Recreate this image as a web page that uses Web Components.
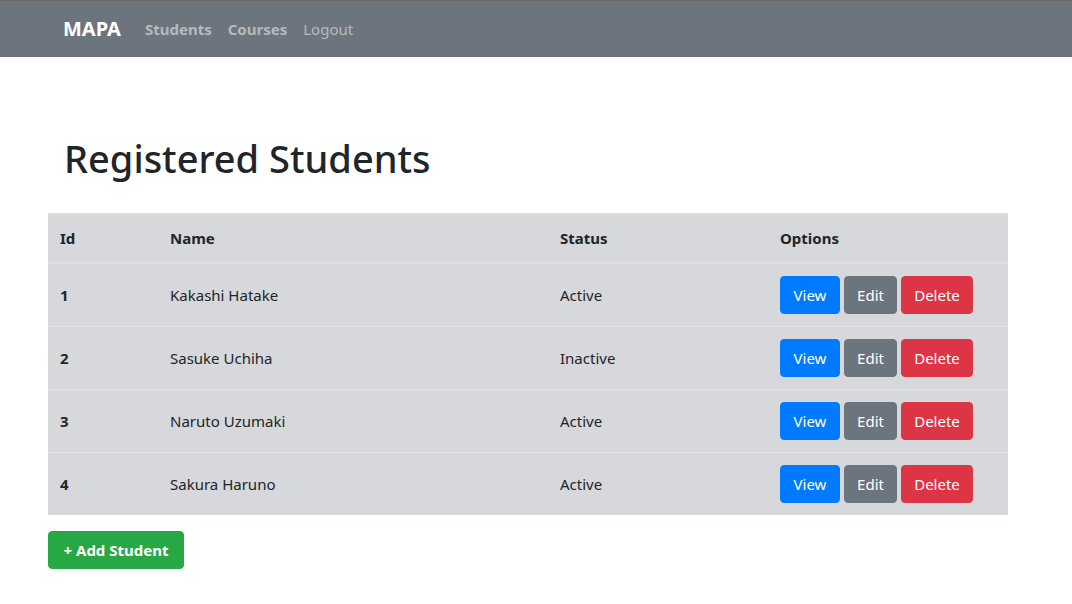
<!DOCTYPE html>
<html lang="en">
<head>
<meta charset="utf-8">
<meta name="viewport" content="width=device-width, initial-scale=1">
<title>MAPA - Registered Students</title>
<style>
  :root {
    --gray: #6c757d;
    --blue: #007bff;
    --red: #dc3545;
    --green: #28a745;
    --text: #212529;
  }
  body {
    margin: 0;
    background: #fff;
    color: var(--text);
    font: 400 15px/24px "Noto Sans", "Open Sans", sans-serif;
  }
</style>
</head>
<body>
<mapa-app></mapa-app>

<script>
class Base extends HTMLElement {
  constructor() {
    super();
    this.attachShadow({ mode: "open" }).innerHTML = this.render();
  }
}

customElements.define("nav-item", class extends Base {
  render() {
    return `
      <style>
        :host { display: block; }
        a { display: block; padding: 8px; color: rgba(255, 255, 255, .5); text-decoration: none; }
        a:hover { color: rgba(255, 255, 255, .75); }
        :host([strong]) a { font-weight: 700; }
      </style>
      <a href="#"><slot></slot></a>`;
  }
});

customElements.define("nav-bar", class extends Base {
  render() {
    return `
      <style>
        :host { display: block; background: var(--gray); border-top: 1px solid #6b6666; }
        nav { display: flex; align-items: center; padding: 8px 63px; }
        .brand { margin-right: 16px; color: #fff; font-size: 20px; font-weight: 700; text-decoration: none; }
      </style>
      <nav>
        <a class="brand" href="#">MAPA</a>
        <slot></slot>
      </nav>`;
  }
});

customElements.define("action-button", class extends Base {
  render() {
    return `
      <style>
        :host { display: block; }
        button {
          display: block; box-sizing: border-box; min-width: var(--width); padding: 6px 12px;
          border: 1px solid var(--tone); border-radius: 4px; background: var(--tone);
          color: #fff; font: inherit; white-space: nowrap; cursor: pointer;
        }
        :host([tone="view"]) { --tone: var(--blue); --width: 60px; }
        :host([tone="edit"]) { --tone: var(--gray); --width: 53px; }
        :host([tone="delete"]) { --tone: var(--red); --width: 72px; }
        :host([tone="add"]) { --tone: var(--green); --width: 136px; font-weight: 700; }
      </style>
      <button type="button"><slot></slot></button>`;
  }
});

customElements.define("student-table", class extends Base {
  render() {
    const students = [
      [1, "Kakashi Hatake", "Active"],
      [2, "Sasuke Uchiha", "Inactive"],
      [3, "Naruto Uzumaki", "Active"],
      [4, "Sakura Haruno", "Active"],
    ];
    const rows = students.map(([id, name, status]) => `
      <tr>
        <th scope="row">${id}</th><td>${name}</td><td>${status}</td>
        <td><div class="options">
          <action-button tone="view">View</action-button>
          <action-button tone="edit">Edit</action-button>
          <action-button tone="delete">Delete</action-button>
        </div></td>
      </tr>`).join("");
    return `
      <style>
        :host { display: block; }
        table { width: 100%; table-layout: fixed; border-spacing: 0; background: #d6d8db; }
        th, td { padding: 12px; text-align: left; border-top: 1px solid #dee2e6; }
        th { font-weight: 700; }
        thead th { border-bottom: 2px solid #dee2e6; }
        tbody tr:first-child > * { border-top: 0; }
        .id { width: 110px; }
        .status { width: 220px; }
        .choices { width: 240px; }
        .options { display: flex; gap: 4px; }
      </style>
      <table>
        <colgroup><col class="id"><col><col class="status"><col class="choices"></colgroup>
        <thead><tr><th scope="col">Id</th><th scope="col">Name</th><th scope="col">Status</th><th scope="col">Options</th></tr></thead>
        <tbody>${rows}</tbody>
      </table>`;
  }
});

customElements.define("mapa-app", class extends Base {
  render() {
    return `
      <style>
        :host { display: block; }
        main { padding: 77px 64px 32px 48px; }
        h1 { margin: 0 16px 31px; font-size: 38px; line-height: 48px; font-weight: 500; }
        .add { display: flex; margin-top: 16px; }
      </style>
      <nav-bar>
        <nav-item strong>Students</nav-item>
        <nav-item strong>Courses</nav-item>
        <nav-item>Logout</nav-item>
      </nav-bar>
      <main>
        <h1>Registered Students</h1>
        <student-table></student-table>
        <div class="add"><action-button tone="add">+ Add Student</action-button></div>
      </main>`;
  }
});
</script>
</body>
</html>
